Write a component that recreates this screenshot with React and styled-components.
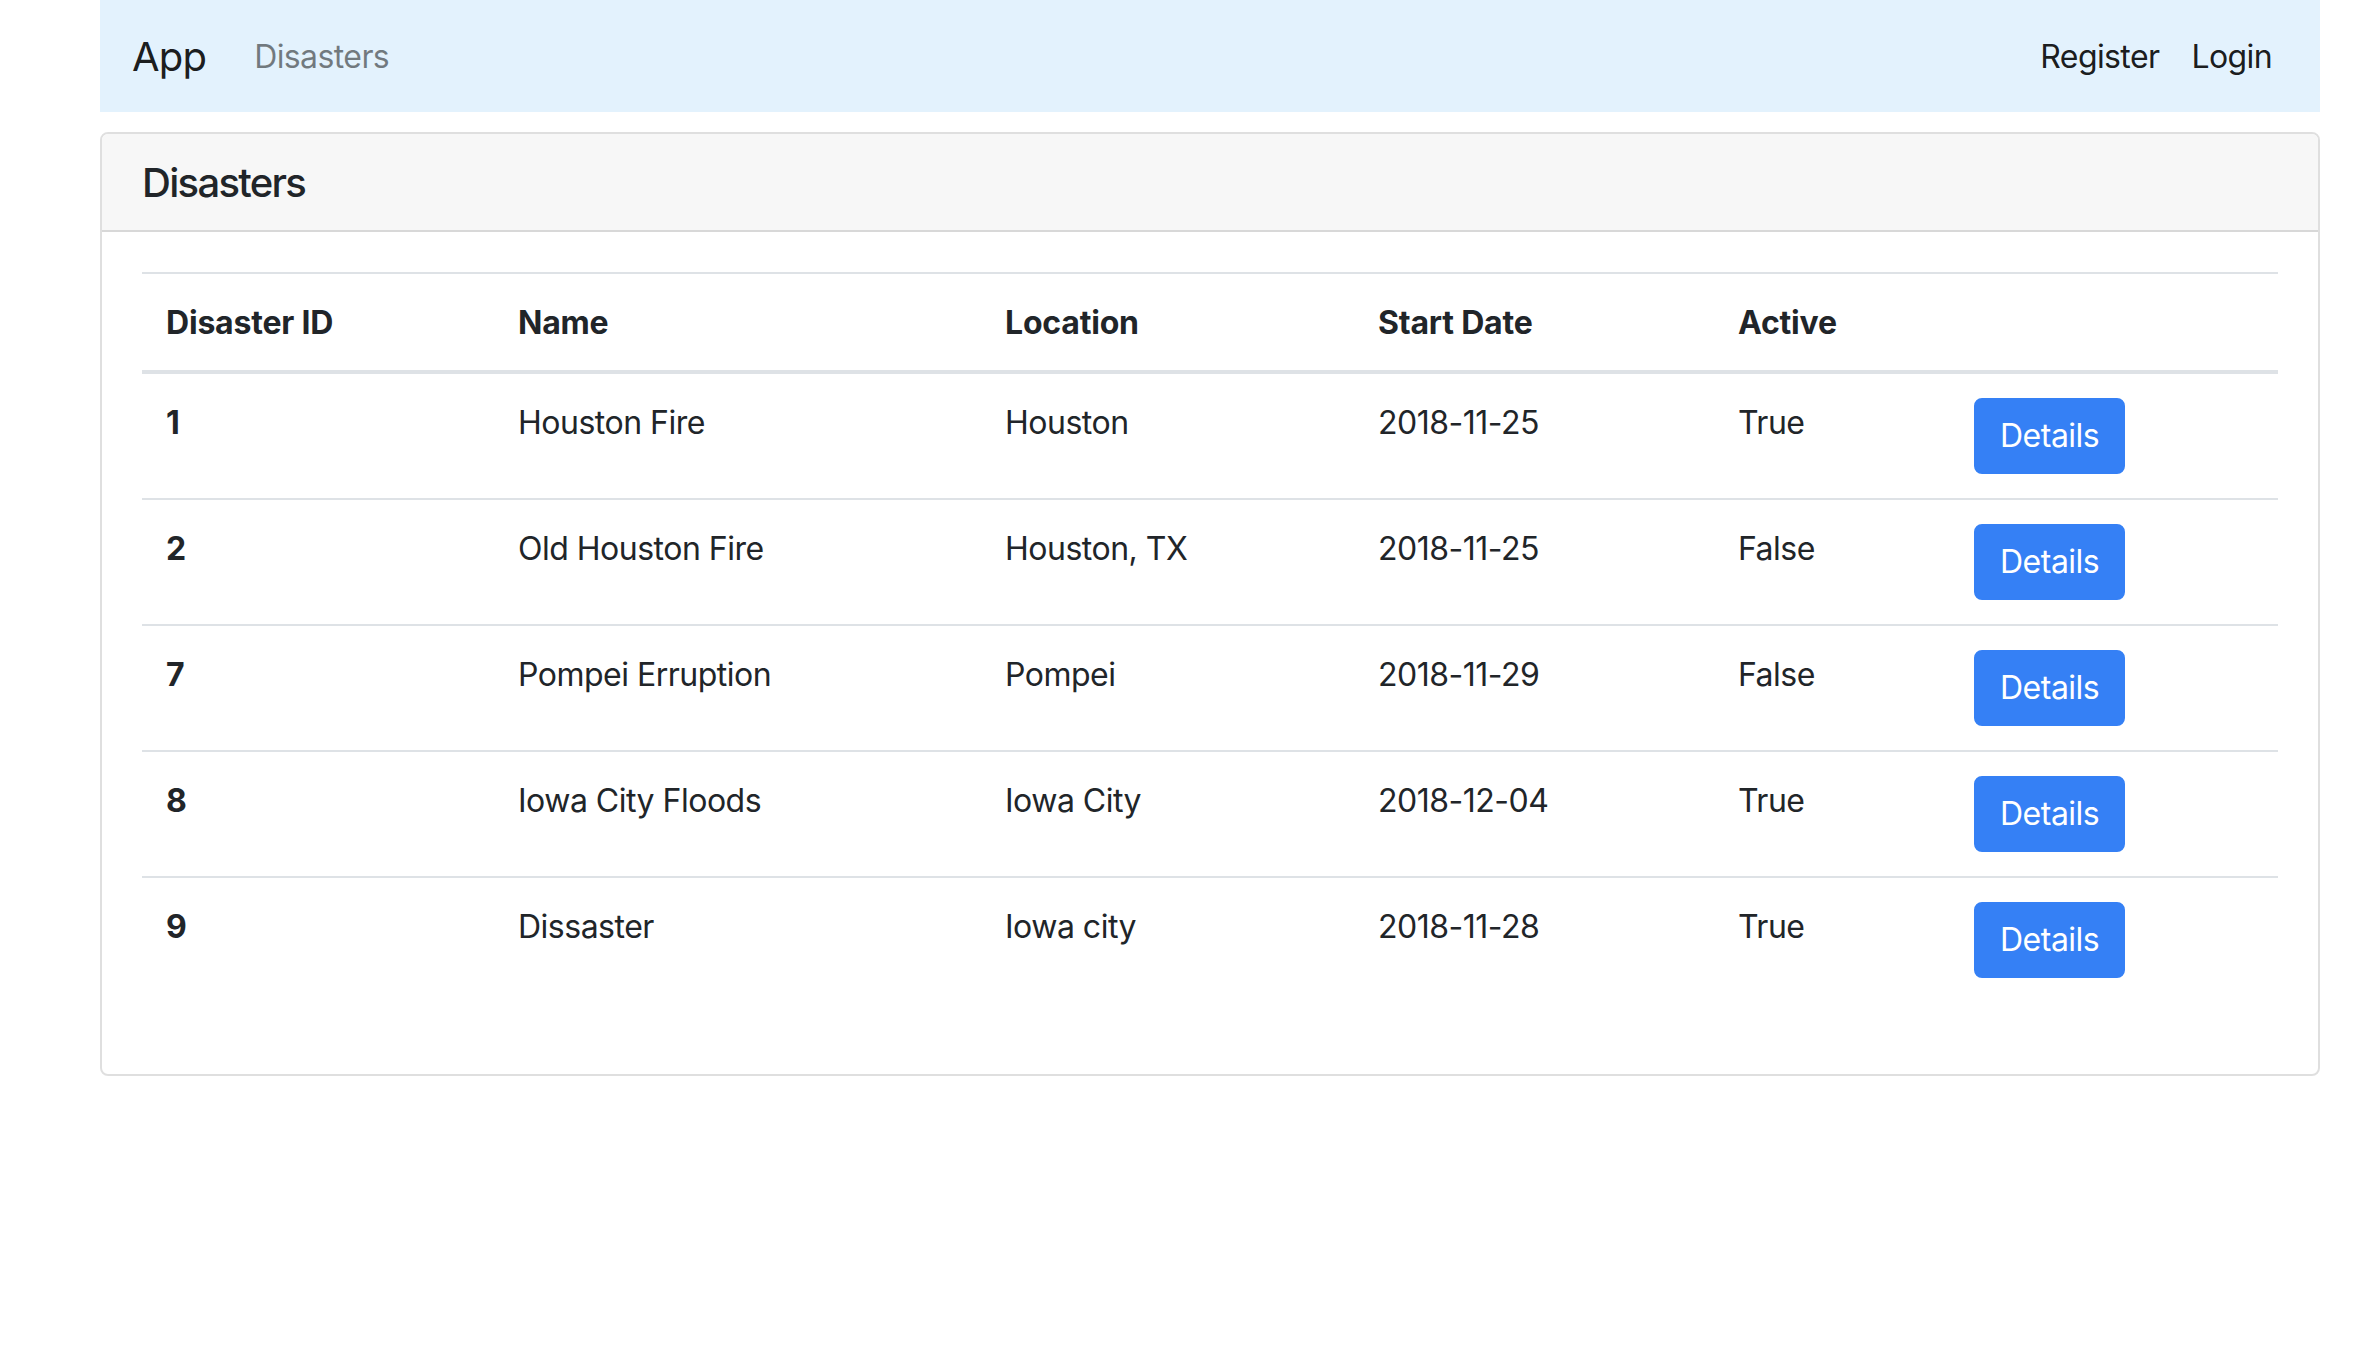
import React from 'react';
import styled, { createGlobalStyle } from 'styled-components';

const disasters = [
  { id: 1, name: 'Houston Fire', location: 'Houston', start: '2018-11-25', active: 'True' },
  { id: 2, name: 'Old Houston Fire', location: 'Houston, TX', start: '2018-11-25', active: 'False' },
  { id: 7, name: 'Pompei Erruption', location: 'Pompei', start: '2018-11-29', active: 'False' },
  { id: 8, name: 'Iowa City Floods', location: 'Iowa City', start: '2018-12-04', active: 'True' },
  { id: 9, name: 'Dissaster', location: 'Iowa city', start: '2018-11-28', active: 'True' },
];

const columns = [
  { label: 'Disaster ID', width: 352 },
  { label: 'Name', width: 487 },
  { label: 'Location', width: 373 },
  { label: 'Start Date', width: 360 },
  { label: 'Active', width: 236 },
  { label: '', width: 328 },
];

const App = () => {
  return (
    <>
      <GlobalStyle />
      <Page>
        <Navbar>
          <Brand>App</Brand>
          <NavLink>Disasters</NavLink>
          <NavRight>
            <NavLink dark>Register</NavLink>
            <NavLink dark>Login</NavLink>
          </NavRight>
        </Navbar>

        <Card>
          <CardHeader>Disasters</CardHeader>
          <CardBody>
            <Table>
              <thead>
                <tr>
                  {columns.map((c) => (
                    <Th key={c.label} width={c.width}>{c.label}</Th>
                  ))}
                </tr>
              </thead>
              <tbody>
                {disasters.map((d) => (
                  <tr key={d.id}>
                    <Td bold>{d.id}</Td>
                    <Td>{d.name}</Td>
                    <Td>{d.location}</Td>
                    <Td>{d.start}</Td>
                    <Td>{d.active}</Td>
                    <Td>
                      <DetailsButton>Details</DetailsButton>
                    </Td>
                  </tr>
                ))}
              </tbody>
            </Table>
          </CardBody>
        </Card>
      </Page>
    </>
  );
};

const GlobalStyle = createGlobalStyle`
  body {
    margin: 0;
    background: #fff;
    color: #212529;
    font-family: Inter, "Noto Sans", "Liberation Sans", sans-serif;
  }
`;

const Page = styled.div`
  width: 2220px;
  margin-left: 100px;
`;

const Navbar = styled.nav`
  display: flex;
  align-items: center;
  height: 112px;
  padding: 2px 32px 0;
  box-sizing: border-box;
  background-color: #e3f2fd;
`;

const Brand = styled.span`
  font-size: 40px;
  line-height: 60px;
  color: rgba(0, 0, 0, 0.9);
  margin-right: 32px;
  letter-spacing: -0.8px;
`;

const NavRight = styled.div`
  display: flex;
  margin-left: auto;
`;

const NavLink = styled.span`
  font-size: 32px;
  line-height: 48px;
  padding: 0 16px;
  letter-spacing: -0.6px;
  color: ${(p) => (p.dark ? 'rgba(0, 0, 0, 0.9)' : 'rgba(0, 0, 0, 0.5)')};
`;

const Card = styled.div`
  margin-top: 20px;
  border: 2px solid rgba(0, 0, 0, 0.125);
  border-radius: 8px;
  overflow: hidden;
`;

const CardHeader = styled.h5`
  margin: 0;
  padding: 25px 40px 23px;
  font-size: 40px;
  font-weight: 500;
  line-height: 48px;
  letter-spacing: -1.7px;
  background-color: #f7f7f7;
  border-bottom: 2px solid rgba(0, 0, 0, 0.125);
`;

const CardBody = styled.div`
  padding: 40px;
`;

const Table = styled.table`
  width: 100%;
  table-layout: fixed;
  border-collapse: collapse;
  margin-bottom: 32px;
  font-size: 32px;
  line-height: 48px;
  letter-spacing: -0.5px;
`;

const Th = styled.th`
  box-sizing: border-box;
  width: ${(p) => p.width}px;
  padding: 25px 24px 23px;
  text-align: left;
  vertical-align: bottom;
  font-weight: 700;
  letter-spacing: -0.2px;
  border-top: 2px solid #dee2e6;
  border-bottom: 4px solid #dee2e6;
`;

const Td = styled.td`
  padding: 25px 24px 23px;
  vertical-align: top;
  font-weight: ${(p) => (p.bold ? 700 : 400)};
  border-top: 2px solid #dee2e6;
`;

const DetailsButton = styled.button`
  display: block;
  font-family: inherit;
  font-size: 32px;
  line-height: 48px;
  letter-spacing: -0.5px;
  padding: 12px 24px;
  margin-top: -1px;
  margin-bottom: 1px;
  color: #fff;
  background-color: #3580f5;
  border: 2px solid #3580f5;
  border-radius: 8px;
  cursor: pointer;
`;

export default App;
